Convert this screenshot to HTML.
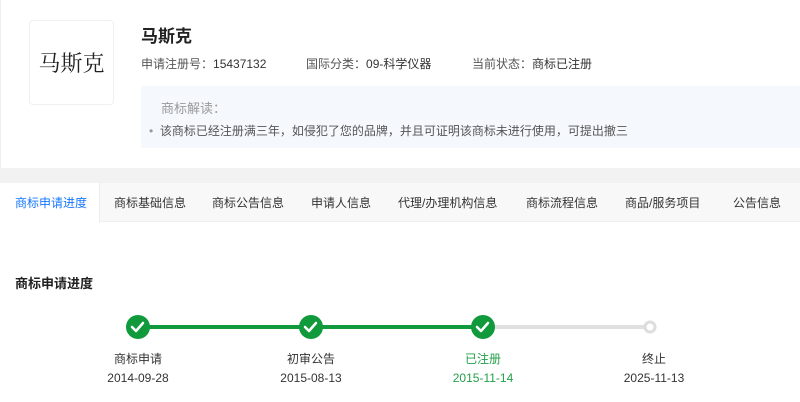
<!DOCTYPE html>
<html><head><meta charset="utf-8"><style>
*{margin:0;padding:0;box-sizing:border-box}
body{width:800px;height:402px;overflow:hidden;background:#fff;font-family:"Liberation Sans","Noto Sans CJK SC",sans-serif;color:#333;position:relative}
.a{position:absolute;white-space:nowrap}
.t{top:194px;font-size:12px}
</style></head><body>
<div class="a" style="left:0;top:0;width:800px;height:168px;background:#fff;border-left:1px solid #eee"></div>
<div class="a" style="left:0;top:168px;width:800px;height:15px;background:#f2f2f2"></div>
<div class="a" style="left:29px;top:20px;width:85px;height:85px;border:1px solid #f0f0f0;border-radius:4px;font-family:'Noto Serif CJK SC',serif;font-size:22px;color:#222;display:flex;align-items:center;justify-content:center">马斯克</div>
<div class="a" style="left:141px;top:22px;font-size:17px;font-weight:bold;color:#222">马斯克</div>
<div class="a" style="left:141px;top:55px;font-size:12px;color:#555">申请注册号：<span style="color:#333">15437132</span></div>
<div class="a" style="left:306px;top:55px;font-size:12px;color:#555">国际分类：<span style="color:#333">09-科学仪器</span></div>
<div class="a" style="left:472px;top:55px;font-size:12px;color:#555">当前状态：<span style="color:#333">商标已注册</span></div>
<div class="a" style="left:141px;top:86px;width:659px;height:62px;background:#f5f9fe"></div>
<div class="a" style="left:161px;top:98px;font-size:13px;color:#999">商标解读：</div>
<div class="a" style="left:149px;top:122px;font-size:12px;color:#555"><span style="color:#999">•</span>&nbsp; 该商标已经注册满三年，如侵犯了您的品牌，并且可证明该商标未进行使用，可提出撤三</div>
<div class="a" style="left:0;top:183px;width:800px;height:39px;background:#f8f8f8;border-bottom:1px solid #eee"></div>
<div class="a" style="left:0;top:183px;width:100px;height:40px;background:#fff;border-right:1px solid #eee"></div>
<div class="a t" style="left:15px;color:#1677ff">商标申请进度</div>
<div class="a t" style="left:114px">商标基础信息</div>
<div class="a t" style="left:212px">商标公告信息</div>
<div class="a t" style="left:311px">申请人信息</div>
<div class="a t" style="left:398px">代理/办理机构信息</div>
<div class="a t" style="left:526px">商标流程信息</div>
<div class="a t" style="left:625px">商品/服务项目</div>
<div class="a t" style="left:733px">公告信息</div>
<div class="a" style="left:15px;top:273px;font-size:13px;font-weight:bold;color:#222">商标申请进度</div>
<div class="a" style="left:138px;top:325px;width:345px;height:4px;background:#109a3c"></div>
<div class="a" style="left:483px;top:325px;width:167px;height:4px;background:#e0e0e0"></div>
<svg class="a" style="left:0;top:310px" width="800" height="34">
<g fill="#109a3c"><circle cx="138" cy="17" r="12"/><circle cx="311" cy="17" r="12"/><circle cx="483" cy="17" r="12"/></g>
<g fill="none" stroke="#fff" stroke-width="2.5" stroke-linecap="round" stroke-linejoin="round">
<path d="M132 17l4 4 7-8"/><path d="M305 17l4 4 7-8"/><path d="M477 17l4 4 7-8"/></g>
<circle cx="650" cy="17" r="5" fill="#fff" stroke="#ddd" stroke-width="3"/>
</svg>
<div class="a" style="left:88px;top:350px;width:100px;text-align:center;font-size:12px">商标申请</div>
<div class="a" style="left:88px;top:371px;width:100px;text-align:center;font-size:12px">2014-09-28</div>
<div class="a" style="left:261px;top:350px;width:100px;text-align:center;font-size:12px">初审公告</div>
<div class="a" style="left:261px;top:371px;width:100px;text-align:center;font-size:12px">2015-08-13</div>
<div class="a" style="left:433px;top:350px;width:100px;text-align:center;font-size:12px;color:#22a04a">已注册</div>
<div class="a" style="left:433px;top:371px;width:100px;text-align:center;font-size:12px;color:#22a04a">2015-11-14</div>
<div class="a" style="left:604px;top:350px;width:100px;text-align:center;font-size:12px">终止</div>
<div class="a" style="left:604px;top:371px;width:100px;text-align:center;font-size:12px">2025-11-13</div>
</body></html>
